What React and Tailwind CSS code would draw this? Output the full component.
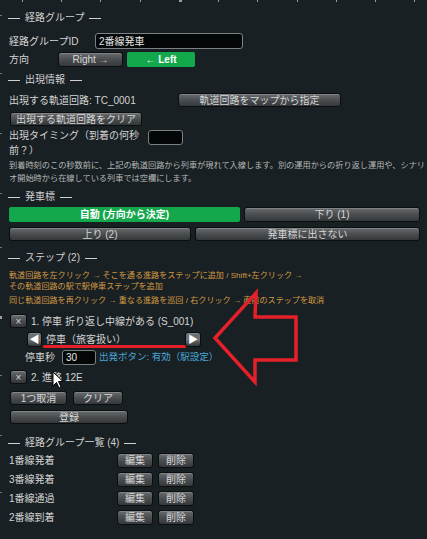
import React from "react";

const font = { fontFamily: '"Liberation Sans", "Noto Sans CJK JP", sans-serif' };

function Btn({ className = "", children }) {
  return (
    <div
      className={`flex items-center justify-center whitespace-nowrap rounded-[3px] border border-[#0b0e0f] bg-linear-to-b from-[#686c6e] via-[#4a4e50] to-[#34383a] text-[10px] text-[#d6d6d6] shadow-[inset_0_1px_0_rgba(255,255,255,0.18)] ${className}`}
    >
      {children}
    </div>
  );
}

function Dash() {
  return <span className="inline-block h-px w-[12px] bg-[#d0d0d0] align-middle" />;
}

function Header({ children, className = "" }) {
  return (
    <div className={`flex h-[14px] items-center gap-[5px] whitespace-nowrap text-[10px] leading-[14px] text-[#d0d0d0] ${className}`}>
      <Dash />
      <span>{children}</span>
      <Dash />
    </div>
  );
}

function Input({ className = "", children }) {
  return (
    <div
      className={`flex items-center rounded-[3px] border border-[#7c8082] bg-[#040707] px-[3px] text-[10px] text-[#e6e6e6] ${className}`}
    >
      {children}
    </div>
  );
}

const groups = ["1番線発着", "3番線発着", "1番線通過", "2番線到着"];
const tickXs = [22, 61, 100, 140, 179, 218, 257, 297, 336, 375, 414];
const tickYs = [15, 73, 133, 193, 247, 375, 435, 492];

export default function App() {
  return (
    <div
      className="relative h-[539px] w-[427px] overflow-hidden bg-[#192023] pl-[9px] pr-[7px] pt-[11px] text-[10px] text-[#d4d4d4]"
      style={font}
    >
      {/* frame ticks along the top and left edges */}
      {tickXs.map((x) => (
        <div
          key={x}
          className={`absolute top-0 h-[2px] bg-[#9aa0a2] ${x === 179 ? "w-[3px]" : "w-[1px]"}`}
          style={{ left: x }}
        />
      ))}
      {tickYs.map((y) => (
        <div key={y} className="absolute left-0 h-[1px] w-[2px] bg-[#6c7274]" style={{ top: y }} />
      ))}
      <div className="absolute left-0 top-[316px] h-[3px] w-[2px] bg-[#9aa0a2]" />

      <Header className="-ml-px">経路グループ</Header>

      <div className="mt-[8px] flex h-[16px] items-center">
        <div className="w-[86px]">経路グループID</div>
        <Input className="h-[16px] w-[148px]">2番線発車</Input>
      </div>

      <div className="mt-[3px] flex h-[15px] items-center">
        <div className="w-[49px]">方向</div>
        <Btn className="h-[15px] w-[65px]">Right →</Btn>
        <div className="ml-[4px] flex h-[15px] w-[68px] items-center justify-center rounded-[2px] bg-[#13a84c] text-[10px] font-bold text-white">
          ← Left
        </div>
      </div>

      <Header className="mt-[6px] -ml-px">出現情報</Header>

      <div className="mt-[6px] flex h-[14px] items-center">
        <div className="w-[169px] whitespace-nowrap">出現する軌道回路: TC_0001</div>
        <Btn className="h-[14px] w-[163px]">軌道回路をマップから指定</Btn>
      </div>

      <Btn className="ml-px mt-[5px] h-[14px] w-[132px]">出現する軌道回路をクリア</Btn>

      <div className="mt-[2px] flex items-start">
        <div className="w-[139px] leading-[15px]">出現タイミング（到着の何秒前？）</div>
        <Input className="mt-[2px] h-[15px] w-[35px]" />
      </div>

      <div className="-mr-[6px] mt-[1px] text-[8.2px] leading-[13px] text-[#b4b8b8]">
        到着時刻のこの秒数前に、上記の軌道回路から列車が現れて入線します。別の運用からの折り返し運用や、シナリオ開始時から在線している列車では空欄にします。
      </div>

      <Header className="mt-[5px] -ml-px">発車標</Header>

      <div className="mt-[3px] flex h-[15px] gap-[4px]">
        <div className="flex w-[231px] items-center justify-center rounded-[2px] bg-[#13a84c] text-[10px] font-bold text-white">
          自動 (方向から決定)
        </div>
        <Btn className="flex-1">下り (1)</Btn>
      </div>
      <div className="mt-[5px] flex h-[14px] gap-[4px]">
        <Btn className="w-[182px]">上り (2)</Btn>
        <Btn className="flex-1">発車標に出さない</Btn>
      </div>

      <Header className="mt-[10px] -ml-px">ステップ (2)</Header>

      <div className="mt-[5px] whitespace-nowrap text-[8.1px] leading-[11px] text-[#d39a45]">
        <div>軌道回路を左クリック → そこを通る進路をステップに追加 / Shift+左クリック →</div>
        <div>その軌道回路の駅で駅停車ステップを追加</div>
        <div className="mt-[3px]">同じ軌道回路を再クリック → 重なる進路を巡回 / 右クリック → 直前のステップを取消</div>
      </div>

      <div className="mt-[8px] flex h-[14px] items-center">
        <Btn className="ml-px h-[14px] w-[17px] text-[7px]">×</Btn>
        <div className="ml-[4px]">1. 停車 折り返し中線がある (S_001)</div>
      </div>

      <div className="ml-[18px] mt-[4px] flex h-[15px] w-[174px] items-center">
        <Btn className="h-[15px] w-[15px] from-[#9a9ea0] via-[#707476] to-[#4a4e50] text-[8px] text-white">◀</Btn>
        <div className="ml-[4px] flex-1">停車（旅客扱い）</div>
        <Btn className="h-[15px] w-[16px] from-[#9a9ea0] via-[#707476] to-[#4a4e50] text-[8px] text-white">▶</Btn>
      </div>

      <div className="ml-[16px] mt-[3px] flex h-[15px] items-center">
        <div className="w-[37px]">停車秒</div>
        <Input className="h-[15px] w-[34px]">30</Input>
        <div className="ml-[3px] text-[9.5px] text-[#4aa6d6]">出発ボタン: 有効（駅設定）</div>
      </div>

      <div className="mt-[5px] flex h-[14px] items-center">
        <Btn className="ml-px h-[14px] w-[17px] text-[7px]">×</Btn>
        <div className="ml-[4px]">2. 進路 12E</div>
      </div>

      <div className="ml-px mt-[7px] flex h-[14px] gap-[6px]">
        <Btn className="w-[57px]">1つ取消</Btn>
        <Btn className="w-[50px]">クリア</Btn>
      </div>
      <Btn className="ml-px mt-[5px] h-[14px] w-[118px]">登録</Btn>

      <Header className="mt-[12px] -ml-px">経路グループ一覧 (4)</Header>

      <div className="mt-[3px] flex flex-col gap-[4px]">
        {groups.map((g) => (
          <div key={g} className="flex h-[15px] items-center">
            <div className="w-[108px]">{g}</div>
            <Btn className="h-[15px] w-[36px]">編集</Btn>
            <Btn className="ml-[5px] h-[15px] w-[36px]">削除</Btn>
          </div>
        ))}
      </div>

      {/* red annotation: underline and hollow arrow */}
      <div className="absolute left-[43px] top-[345px] h-[3px] w-[143px] rounded-full bg-[#e5202a]" />
      <svg className="absolute left-[210px] top-[288px]" width="95" height="100" viewBox="210 288 95 100">
        <path
          d="M215 338 L256 293 L255 317 L296 317 L296 360 L255 360 L255 382 Z"
          fill="none"
          stroke="#e5202a"
          strokeWidth="3.5"
          strokeLinejoin="miter"
        />
      </svg>

      {/* mouse pointer */}
      <svg className="absolute left-[52px] top-[371px]" width="12" height="19" viewBox="0 0 12 19">
        <path d="M1 1 L1 15 L4.5 11.5 L7 17 L9 16 L6.5 10.5 L11 10.5 Z" fill="#fff" stroke="#000" strokeWidth="1" />
      </svg>
    </div>
  );
}
